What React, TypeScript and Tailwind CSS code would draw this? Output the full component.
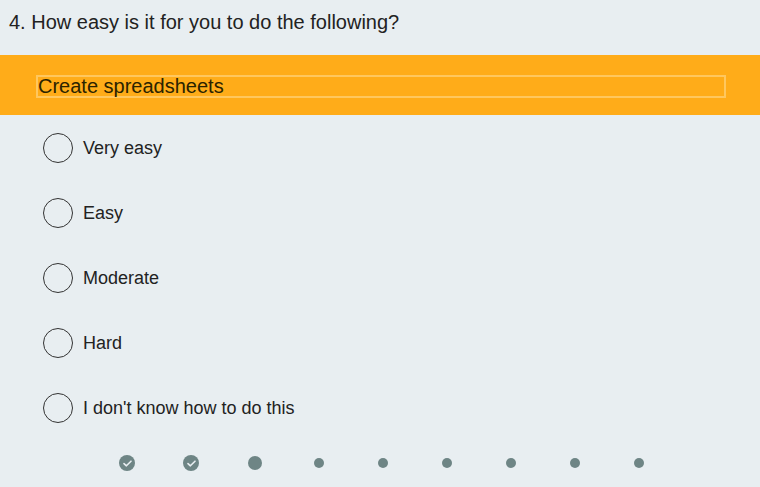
import React from "react";

const options = ["Very easy", "Easy", "Moderate", "Hard", "I don't know how to do this"];

// 0,1 done · 2 current · rest pending
const steps = ["done", "done", "current", "todo", "todo", "todo", "todo", "todo", "todo"];

function StepDot({ state }: { state: string }) {
  if (state === "done") {
    return (
      <div className="w-4 h-4 rounded-full bg-[#6e8585] flex items-center justify-center">
        <svg width="9" height="7" viewBox="0 0 9 7" fill="none">
          <path d="M1 3.6 L3.4 5.8 L8 1.2" stroke="#e8eef1" strokeWidth="1.6" strokeLinecap="round" strokeLinejoin="round" />
        </svg>
      </div>
    );
  }
  if (state === "current") {
    return <div className="w-[14px] h-[14px] rounded-full bg-[#6e8585]" />;
  }
  return <div className="w-[10px] h-[10px] rounded-full bg-[#6e8585]" />;
}

export default function App() {
  return (
    <div className="w-[760px] h-[487px] bg-[#e8eef1] overflow-hidden font-['Liberation_Sans',Arial,sans-serif] text-[#222]">
      <div className="h-[55px] pl-[9px] pt-[10px] text-[20px] leading-[24px]">
        4. How easy is it for you to do the following?
      </div>

      <div className="h-[60px] bg-[#ffac19] pt-[20px] pl-[36px]">
        <div className="w-[690px] h-[23px] border-2 border-[#ffc75e] pl-0 text-[20px] leading-[19px] text-[#2a2300]">
          Create spreadsheets
        </div>
      </div>

      <div className="flex flex-col">
        {options.map((opt) => (
          <div key={opt} className="h-[65px] flex items-center pl-[43px] gap-[10px]">
            <div className="w-[30px] h-[30px] rounded-full border border-[#333]" />
            <span className="text-[18px] leading-[20px]">{opt}</span>
          </div>
        ))}
      </div>

      <div className="h-[46px] flex items-center pl-[95px]">
        {steps.map((s, i) => (
          <div key={i} className="w-[64px] flex justify-center">
            <StepDot state={s} />
          </div>
        ))}
      </div>
    </div>
  );
}
